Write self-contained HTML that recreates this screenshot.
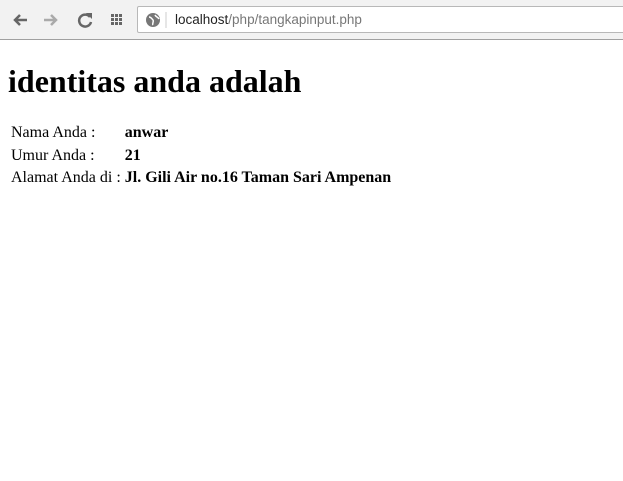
<!DOCTYPE html>
<html><head><style>
body{margin:0;width:623px;height:481px;overflow:hidden;background:#fff;font-family:"Liberation Serif",serif;position:relative}
.bar{position:absolute;left:0;top:0;width:623px;height:39px;background:#f2f2f2;border-bottom:1px solid #a0a0a0}
.addr{position:absolute;left:137px;top:6px;width:500px;height:27px;background:#fff;border:1px solid #b8b8b8;border-radius:2px;box-sizing:border-box}
.url{position:absolute;left:175px;top:12px;font-family:"Liberation Sans",sans-serif;font-size:13.5px;color:#777}
.url b{font-weight:normal;color:#222}
h1{position:absolute;left:8px;top:63px;margin:0;font-size:32px;font-weight:bold}
table{position:absolute;left:8px;top:121px;font-size:16px;border-spacing:2px}
td{padding:1px;line-height:18.5px}
</style></head><body>
<div class="bar"></div>
<svg style="position:absolute;left:0;top:0" width="140" height="40">
<path d="M27 20H15M20 15l-5 5 5 5" stroke="#666" stroke-width="2.5" fill="none"/>
<path d="M44 20h12M51 15l5 5-5 5" stroke="#aaa" stroke-width="2.5" fill="none"/>
<path d="M90 17a6 6 0 1 0 1 5" stroke="#666" stroke-width="2.5" fill="none"/><path d="M86 13h6v6z" fill="#666"/>
<g fill="#666"><rect x="111" y="14" width="3" height="3"/><rect x="115" y="14" width="3" height="3"/><rect x="119" y="14" width="3" height="3"/><rect x="111" y="18" width="3" height="3"/><rect x="115" y="18" width="3" height="3"/><rect x="119" y="18" width="3" height="3"/><rect x="111" y="22" width="3" height="3"/><rect x="115" y="22" width="3" height="3"/><rect x="119" y="22" width="3" height="3"/></g>
</svg>
<div class="addr"></div>
<svg style="position:absolute;left:144px;top:11px" width="24" height="18"><circle cx="9" cy="9" r="7" fill="#777"/><path d="M5 6c2 0 3 2 4 3s-1 4 0 5M11 4c1 2 3 2 4 4" stroke="#fff" stroke-width="1.5" fill="none"/><line x1="22" y1="1" x2="22" y2="17" stroke="#ccc"/></svg>
<div class="url"><b>localhost</b>/php/tangkapinput.php</div>
<h1>identitas anda adalah</h1>
<table>
<tr><td>Nama Anda :</td><td><b>anwar</b></td></tr>
<tr><td>Umur Anda :</td><td><b>21</b></td></tr>
<tr><td>Alamat Anda di :</td><td><b>Jl. Gili Air no.16 Taman Sari Ampenan</b></td></tr>
</table>
</body></html>
